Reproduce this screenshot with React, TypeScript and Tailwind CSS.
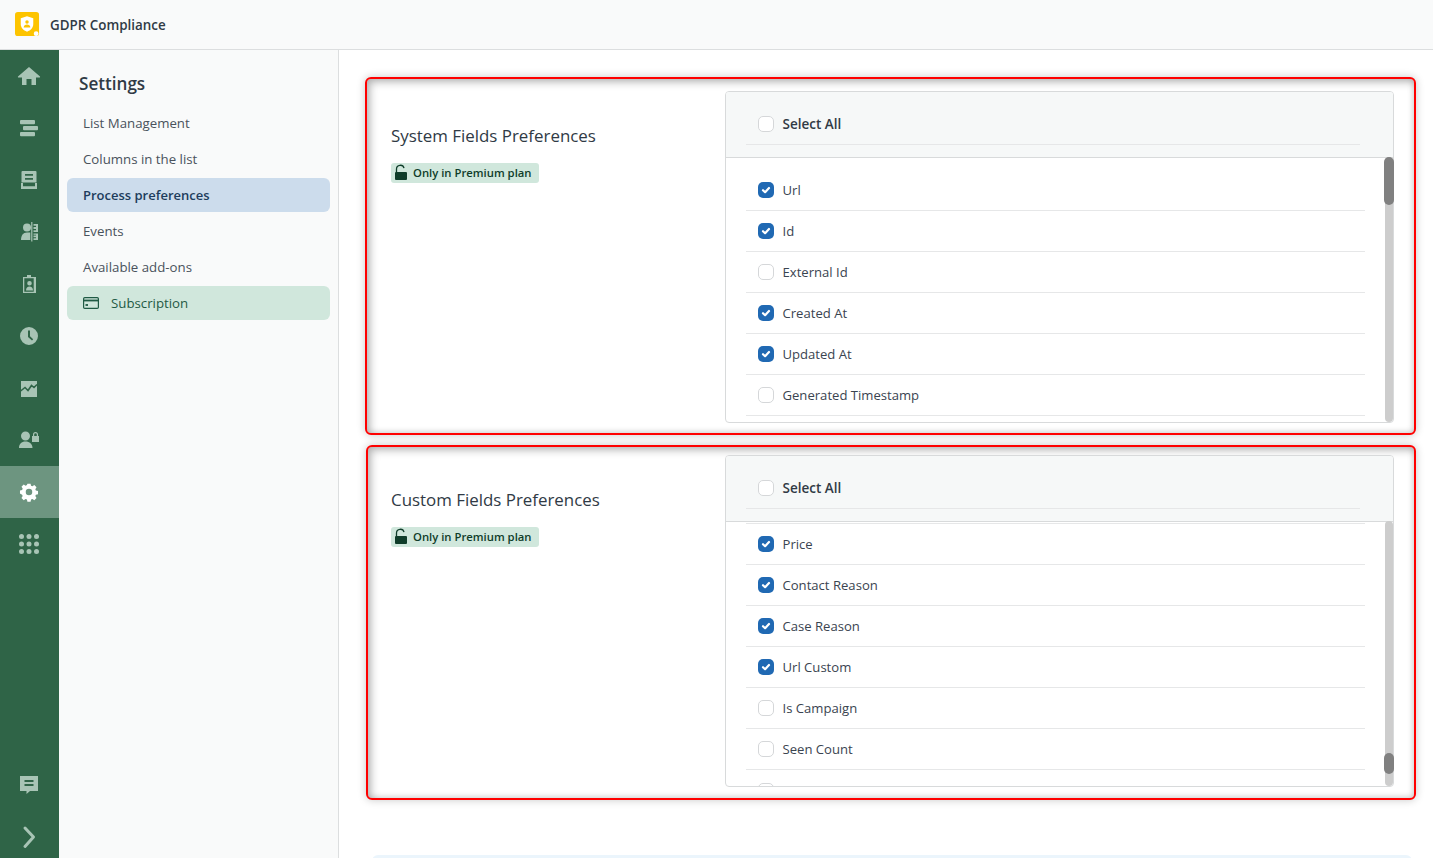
import type { ReactNode } from "react";

const font = "font-['Open_Sans','Noto_Sans',sans-serif]";

function Rail({ children, active }: { children: ReactNode; active?: boolean }) {
    return (
        <div className={`flex h-[52px] items-center justify-center pr-px ${active ? "bg-[#6d9580] text-white" : "text-[#a8c4b5]"}`}>
            <svg viewBox="0 0 24 24" className="size-6" fill="currentColor">{children}</svg>
        </div>
    );
}

function Check({ checked }: { checked?: boolean }) {
    if (checked) {
        return (
            <span className="flex size-4 shrink-0 items-center justify-center rounded-[5px] bg-[#2069b3]">
                <svg viewBox="0 0 16 16" className="size-4" fill="none" stroke="#fff" strokeWidth="2.2" strokeLinecap="round" strokeLinejoin="round">
                    <path d="M5 8.2l2.1 2L11 6" />
                </svg>
            </span>
        );
    }
    return <span className="size-4 shrink-0 rounded-[5px] border border-[#d5d7d9] bg-white" />;
}

function Row({ label, checked, last }: { label: string; checked?: boolean; last?: boolean }) {
    return (
        <div className={`flex h-[41px] shrink-0 items-center gap-[8.5px] pl-[12px] text-[13.1px] text-[#3a4450] ${last ? "" : "border-b border-[#e6e7e8]"}`}>
            <Check checked={checked} />
            <span className="pt-[2px]">{label}</span>
        </div>
    );
}

function Badge() {
    return (
        <div className="mt-[15px] flex h-5 w-[148px] items-center gap-[5px] whitespace-nowrap rounded-[3px] bg-[#d0e7dc] pl-[3px] text-[11.3px] font-semibold text-[#0f3d2a]">
            <svg viewBox="0 0 14 18" className="h-[18px] w-[14px]" fill="#0f3d2a">
                <path d="M2 8h10a1 1 0 0 1 1 1v6a1 1 0 0 1-1 1H2a1 1 0 0 1-1-1V9a1 1 0 0 1 1-1z" />
                <path d="M2.5 8V5a3.8 3.8 0 0 1 7.5-.8" fill="none" stroke="#0f3d2a" strokeWidth="1.3" />
            </svg>
            <span className="pt-px">Only in Premium plan</span>
        </div>
    );
}

function Panel({ title, rows, outline, column, thumb, topLine, lastLabel }: {
    title: string; rows: [string, boolean][]; outline: string; column: string; thumb: string; topLine?: boolean; lastLabel?: string;
}) {
    return (
        <section className={`flex rounded-[6px] border-2 border-[#ff0000] bg-white shadow-[0_0_8px_rgba(0,0,0,0.22),inset_3px_3px_8px_rgba(0,0,0,0.28),inset_-1px_-1px_6px_rgba(0,0,0,0.12)] ${outline}`}>
            <div className={`shrink-0 pt-[33px] ${column}`}>
                <h2 className="text-[16.9px] leading-6 text-[#303a45]">{title}</h2>
                <Badge />
            </div>
            <div className="relative h-[332px] w-[669px]">
                <div className="flex h-full flex-col overflow-hidden rounded-[4px] border border-[#d8dadb]">
                    <div className="h-[66px] shrink-0 border-b border-[#d8dadb] bg-[#f6f8f8] pl-[20px] pr-[33px]">
                        <div className="flex h-[53px] items-center gap-[8.5px] border-b border-[#e6e7e8] pl-[12px] pt-[12px] text-[13.5px] font-semibold text-[#303a45]">
                            <Check />
                            <span>Select All</span>
                        </div>
                    </div>
                    <div className={`flex min-h-0 flex-1 flex-col overflow-hidden pl-[20px] pr-[28px] ${topLine ? "pt-px" : "pt-[12px]"}`}>
                        {topLine && <div className="h-px shrink-0 bg-[#e6e7e8]" />}
                        {rows.map(([label, checked]) => <Row key={label} label={label} checked={checked} />)}
                        {lastLabel && <Row label={lastLabel} last />}
                    </div>
                </div>
                <div className="absolute bottom-[1px] right-px top-[66px] w-2 rounded-[4px] bg-[#cdcdcd]" />
                <div className={`absolute right-0 w-[10px] rounded-[5px] bg-[#808080] ${thumb}`} />
            </div>
        </section>
    );
}

export default function App() {
    return (
        <div className={`flex h-[858px] w-[1433px] flex-col overflow-hidden bg-white ${font}`}>
            <header className="flex h-[50px] shrink-0 items-center gap-[10px] border-b border-[#dcdedf] bg-[#f9fafa] pl-[15px]">
                <svg viewBox="0 0 26 26" className="size-[25px]">
                    <rect width="25" height="25" rx="3" fill="#fdc400" />
                    <path d="M12.5 4.500l6.500 2v6c0 4-2.700 6.500-6.500 8-3.800-1.500-6.500-4-6.500-8v-6z" fill="#fff" />
                    <circle cx="12.5" cy="10.5" r="1.8" fill="#fdc400" />
                    <path d="M9 16c.3-2.200 1.600-3 3.500-3s3.200.8 3.500 3z" fill="#fdc400" />
                    <circle cx="22" cy="22.5" r="2.5" fill="#fff" />
                </svg>
                <span className="pt-[2px] text-[13.4px] font-semibold text-[#303a45]">GDPR Compliance</span>
            </header>
            <div className="flex min-h-0 flex-1">
                <nav className="mb-[-5px] flex w-[59px] shrink-0 flex-col bg-[#2f6447]">
                    <Rail><path d="M12 3L1 12.500c-.3.500 0 1 .5 1H5V21h4.500v-6h5v6H19v-7.500h3.500c.5 0 .8-.5.5-1z" /></Rail>
                    <Rail>
                        <rect x="3" y="4" width="15" height="4.300" rx="1" />
                        <rect x="6" y="10" width="15" height="4.300" rx="1" />
                        <rect x="3" y="16" width="15" height="4.300" rx="1" />
                    </Rail>
                    <Rail><path fillRule="evenodd" d="M5.500 3h13a1 1 0 0 1 1 1v10.500h-15V4a1 1 0 0 1 1-1zM8 6v1.700h8V6zm0 4v1.700h8V10zM4 15h2v3.200h12V15h2v6H4z" /></Rail>
                    <Rail><path fillRule="evenodd" d="M10 3.500a4 4 0 1 1 0 8 4 4 0 0 1 0-8zM4 20c0-4.500 2-7.500 6-7.500h3.300V20zM14.200 2h1.200v19.500h-1.200zM16.500 4H21v8h-4.500v-1.800h2.500V8.900h-2.500V7.100H19V5.800h-2.500zM16.500 13.500H21V20h-4.500v-1.700H19v-1.100h-2.500v-1.600H19v-.9h-2.500z" /></Rail>
                    <Rail><path fillRule="evenodd" d="M10 3h4v2h5v16H6V5h4zM7.300 6.300v13.400h9.400V6.300zM12.500 9a2.300 2.300 0 1 1 0 4.600 2.300 2.300 0 0 1 0-4.600zM9 18.500c0-2.600 1.500-4 3.500-4s3.500 1.400 3.500 4z" /></Rail>
                    <Rail><path fillRule="evenodd" d="M12 3a9 9 0 1 1 0 18 9 9 0 0 1 0-18zm-1 3.500V13l4 3.600 1.200-1.300L13 12.300V6.500z" /></Rail>
                    <Rail>
                        <rect x="4" y="5" width="16" height="16" />
                        <path d="M3 15.500l5-4 3 3 3.500-5 2.500 2 3-3" fill="none" stroke="#2f6447" strokeWidth="1.6" />
                    </Rail>
                    <Rail><path fillRule="evenodd" d="M8.500 3.500a4.500 4.500 0 1 1 0 9 4.500 4.500 0 0 1 0-9zM2 20c0-4 2.500-6.500 6.500-6.500S15.500 16 15.500 20zM15 8h1V6.500a2.500 2.500 0 0 1 5 0V8h1v6h-7zM17.200 8h2.600V6.500a1.300 1.300 0 0 0-2.600 0z" /></Rail>
                    <Rail active>
                        <path transform="translate(12 12) scale(.93) translate(-12 -12)" fillRule="evenodd" d="M10.300 3h3.400l.5 2.300 1.500.6 2-1.300 2.400 2.400-1.300 2 .6 1.500 2.300.5v3.400l-2.300.5-.6 1.500 1.300 2-2.400 2.400-2-1.300-1.500.6-.5 2.300h-3.400l-.5-2.300-1.500-.6-2 1.300-2.400-2.400 1.300-2-.6-1.500L2.300 13.700v-3.400l2.300-.5.6-1.500-1.300-2 2.400-2.400 2 1.300 1.500-.6zM12 8.500a3.500 3.500 0 1 0 0 7 3.500 3.500 0 0 0 0-7z" />
                    </Rail>
                    <Rail>
                        <circle cx="4.500" cy="4.500" r="2.500" /><circle cx="12" cy="4.500" r="2.500" /><circle cx="19.500" cy="4.500" r="2.500" />
                        <circle cx="4.500" cy="12" r="2.500" /><circle cx="12" cy="12" r="2.500" /><circle cx="19.500" cy="12" r="2.500" />
                        <circle cx="4.500" cy="19.500" r="2.500" /><circle cx="12" cy="19.500" r="2.500" /><circle cx="19.500" cy="19.500" r="2.500" />
                    </Rail>
                    <div className="flex-1" />
                    <Rail><path fillRule="evenodd" d="M3 3h18v15h-8l-3.500 3v-3H3zM7.500 7v2h9V7zm0 4v2h9v-2z" /></Rail>
                    <Rail><path d="M8 3l8.500 9L8 21.500" fill="none" stroke="currentColor" strokeWidth="3" strokeLinecap="round" strokeLinejoin="round" /></Rail>
                </nav>
                <aside className="w-[280px] shrink-0 border-r border-[#dcdedf] bg-[#f9fafa] px-[8px]">
                    <h1 className="mt-[22px] pl-[12px] text-[17.1px] font-semibold leading-6 text-[#303a45]">Settings</h1>
                    <div className="mt-[10px] flex flex-col gap-[2px] text-[13.25px] text-[#49525c]">
                        <div className="flex h-[34px] items-center pl-[16px] pt-[2px]">List Management</div>
                        <div className="flex h-[34px] items-center pl-[16px] pt-[2px]">Columns in the list</div>
                        <div className="flex h-[34px] items-center rounded-[6px] bg-[#ccdcec] pl-[16px] pt-[2px] text-[13px] font-semibold text-[#203c5c]">Process preferences</div>
                        <div className="flex h-[34px] items-center pl-[16px] pt-[2px]">Events</div>
                        <div className="flex h-[34px] items-center pl-[16px] pt-[2px]">Available add-ons</div>
                        <div className="flex h-[34px] items-center gap-[12px] rounded-[6px] bg-[#d0e7dc] pl-[16px] text-[#1f5a44]">
                            <svg viewBox="0 0 16 12" className="h-3 w-4" fill="none" stroke="#1f5a44" strokeWidth="1.2">
                                <rect x=".6" y=".6" width="14.8" height="10.8" rx="1.2" />
                                <path d="M.6 3.500h14.800" strokeWidth="1.8" />
                                <path d="M2.500 8h2.500" strokeWidth="1.8" />
                            </svg>
                            <span className="pt-[2px]">Subscription</span>
                        </div>
                    </div>
                </aside>
                <main className="min-w-0 flex-1 pl-[26px] pt-[27px]">
                    <Panel
                        title="System Fields Preferences"
                        column="w-[358px] pl-[24px]"
                        outline="h-[358px] w-[1051px] pt-[12px]"
                        rows={[["Url", true], ["Id", true], ["External Id", false], ["Created At", true], ["Updated At", true], ["Generated Timestamp", false]]}
                        thumb="top-[66px] h-[48px]"
                    />
                    <div className="h-[10px]" />
                    <Panel
                        title="Custom Fields Preferences"
                        column="w-[357px] pl-[23px]"
                        outline="ml-px h-[355px] w-[1050px] pt-[8px]"
                        rows={[["Price", true], ["Contact Reason", true], ["Case Reason", true], ["Url Custom", true], ["Is Campaign", false], ["Seen Count", false]]}
                        lastLabel="Last Time Forward"
                        topLine
                        thumb="bottom-[13px] h-[21px]"
                    />
                    <div className="ml-[7px] mt-[55px] h-[20px] w-[1040px] rounded-t-[6px] bg-[#ebf5fc]" />
                </main>
            </div>
        </div>
    );
}
